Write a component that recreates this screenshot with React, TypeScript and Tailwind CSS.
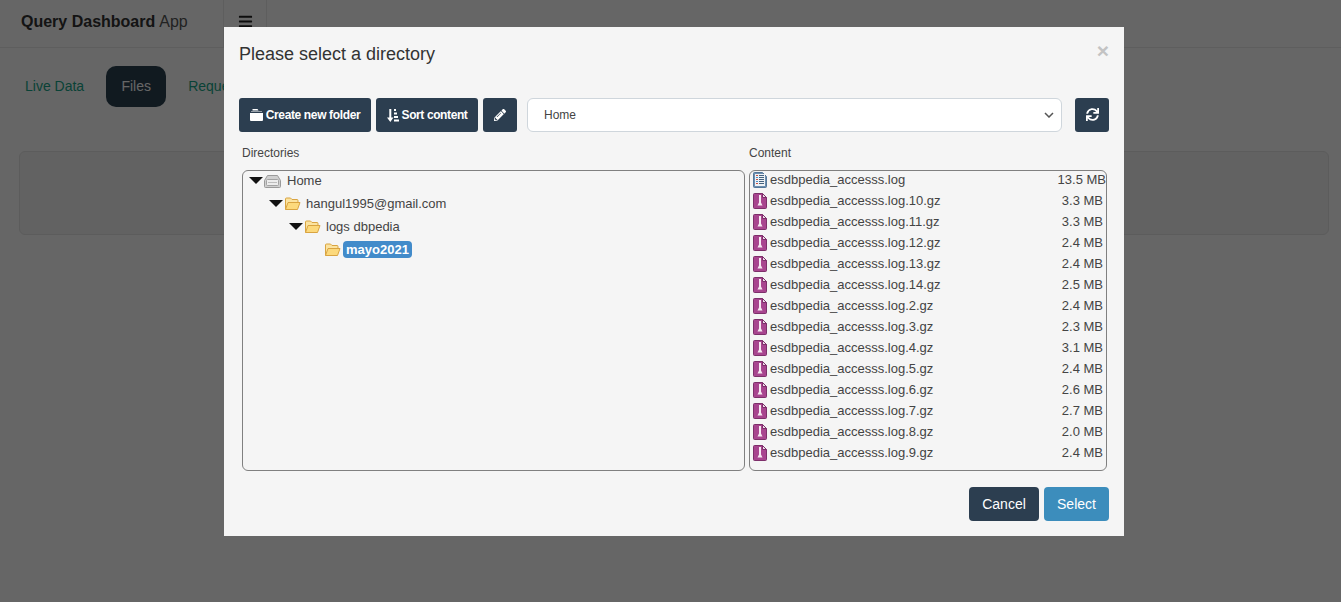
import { FaBars, FaPencilAlt, FaSync } from 'react-icons/fa'

type FileRow = {
  name: string
  size: string
}

const files: FileRow[] = [
  { name: 'esdbpedia_accesss.log', size: '13.5 MB' },
  { name: 'esdbpedia_accesss.log.10.gz', size: '3.3 MB' },
  { name: 'esdbpedia_accesss.log.11.gz', size: '3.3 MB' },
  { name: 'esdbpedia_accesss.log.12.gz', size: '2.4 MB' },
  { name: 'esdbpedia_accesss.log.13.gz', size: '2.4 MB' },
  { name: 'esdbpedia_accesss.log.14.gz', size: '2.5 MB' },
  { name: 'esdbpedia_accesss.log.2.gz', size: '2.4 MB' },
  { name: 'esdbpedia_accesss.log.3.gz', size: '2.3 MB' },
  { name: 'esdbpedia_accesss.log.4.gz', size: '3.1 MB' },
  { name: 'esdbpedia_accesss.log.5.gz', size: '2.4 MB' },
  { name: 'esdbpedia_accesss.log.6.gz', size: '2.6 MB' },
  { name: 'esdbpedia_accesss.log.7.gz', size: '2.7 MB' },
  { name: 'esdbpedia_accesss.log.8.gz', size: '2.0 MB' },
  { name: 'esdbpedia_accesss.log.9.gz', size: '2.4 MB' },
]

function Caret() {
  return (
    <svg width="14" height="7" viewBox="0 0 14 7" className="shrink-0">
      <path d="M0 0h14L7 7z" fill="#111" />
    </svg>
  )
}

function FolderOpen() {
  return (
    <svg width="17" height="14" viewBox="0 0 17 14" className="shrink-0">
      <path d="M1.500 12.500V2a1 1 0 0 1 1-1h4l1.500 1.500h5a1 1 0 0 1 1 1V5" fill="#fbe3a0" stroke="#d9a441" />
      <path d="M1.500 12.500 4 5.500h12l-2.500 7z" fill="#fcd97c" stroke="#d9a441" strokeLinejoin="round" />
    </svg>
  )
}

function DriveIcon() {
  return (
    <svg width="17" height="13" viewBox="0 0 17 13" className="shrink-0">
      <path d="M3.500.5h10l3 5v6a1 1 0 0 1-1 1h-14a1 1 0 0 1-1-1v-6z" fill="#cfcfcf" stroke="#9a9a9a" />
      <rect x="2.500" y="4.500" width="12" height="6" rx="1" fill="#ececec" stroke="#a2a2a2" />
      <path d="M4 7.500h9" stroke="#bdbdbd" />
    </svg>
  )
}

function LogIcon() {
  return (
    <svg width="14" height="16" viewBox="0 0 14 16" className="shrink-0">
      <path d="M.5 1.500a1 1 0 0 1 1-1h8l4 4v10a1 1 0 0 1-1 1h-11a1 1 0 0 1-1-1z" fill="#6d8fb0" stroke="#54779a" />
      <rect x="2" y="2" width="10" height="12" fill="#eef2f6" />
      <path d="M6 3.500h5M6 5.500h5M6 7.500h5M6 9.500h5M6 11.500h5" stroke="#44627f" />
      <path d="M3 3.500h2M3 7.500h2M3 11.500h2" stroke="#c8503f" />
      <path d="M3 5.500h2M3 9.500h2" stroke="#4a90c8" />
    </svg>
  )
}

function ZipIcon() {
  return (
    <svg width="14" height="16" viewBox="0 0 14 16" className="shrink-0">
      <path d="M.5 1.500a1 1 0 0 1 1-1h8l4 4v10a1 1 0 0 1-1 1h-11a1 1 0 0 1-1-1z" fill="#a8458f" stroke="#7d2f6a" />
      <path d="M9.500.5v4h4z" fill="#eed9e8" stroke="#7d2f6a" strokeLinejoin="round" />
      <path d="M6 2h2v7.500l1.500 3h-5L6 9.500z" fill="#f6e9f2" />
    </svg>
  )
}

function FolderGlyph() {
  return (
    <svg width="13" height="12" viewBox="0 0 13 12" className="shrink-0">
      <path d="M2.500 0h5l1 1.500h-6z" fill="#fff" />
      <path d="M1 2.500h11V3H1z" fill="#fff" />
      <path d="M0 4h13v7a1 1 0 0 1-1 1H1a1 1 0 0 1-1-1z" fill="#fff" />
    </svg>
  )
}

function SortGlyph() {
  return (
    <svg width="12" height="13" viewBox="0 0 12 13" className="shrink-0">
      <path d="M2.300 0h2v8.500H6.500L3.300 13 0 8.500h2.300z" fill="#fff" />
      <path d="M7 0h2v2H7zM7 3.500h3v2H7zM7 7h4v2H7zM7 10.500h5v2H7z" fill="#fff" />
    </svg>
  )
}

function TreeNode({
  indent,
  caret = true,
  icon,
  children,
}: {
  indent: string
  caret?: boolean
  icon: React.ReactNode
  children: React.ReactNode
}) {
  return (
    <div className={`flex h-[23px] items-center ${indent}`}>
      {caret && (
        <span className="mb-[4px]">
          <Caret />
        </span>
      )}
      <span className={caret ? 'mb-[3px] ml-[1px]' : 'mb-[3px]'}>{icon}</span>
      {children}
    </div>
  )
}

export default function App() {
  return (
    <div className="relative h-[602px] w-[1341px] overflow-hidden bg-white font-['Liberation_Sans',Arial,sans-serif]">
      {/* page behind the dialog */}
      <header className="flex h-[48px] items-stretch border-b border-[#ececec] bg-white">
        <div className="flex w-[223px] items-center pb-[4px] pl-[21px] text-[16px] text-[#555]">
          <b className="text-[#333]">Query Dashboard</b>
          <span className="ml-1">App</span>
        </div>
        <div className="flex w-[44px] items-center justify-center border-x border-[#ececec] pb-[4px] text-[#222]">
          <FaBars className="text-[15px]" />
        </div>
      </header>

      <nav className="mt-[18px] flex h-[41px] items-center pl-[10px] text-[14px] text-[#18a689]">
        <span className="px-[15px]">Live Data</span>
        <span className="ml-[7px] flex h-[41px] w-[60px] items-center justify-center rounded-[10px] bg-[#2b4150] text-white">
          Files
        </span>
        <span className="ml-[7px] px-[15px]">Requests</span>
      </nav>

      <div className="ml-[19px] mr-[12px] mt-[44px] h-[84px] rounded-[6px] border border-[#e6e6e6] bg-[#f5f5f5]" />

      <div className="absolute inset-0 bg-black/60" />

      {/* directory dialog */}
      <div className="absolute left-[224px] top-[27px] flex h-[509px] w-[900px] flex-col bg-[#f5f5f5] text-[#333]">
        <div className="flex h-[54px] items-start justify-between pl-[15px] pr-[15px] pt-[15px]">
          <h4 className="text-[18px] leading-[25px]">Please select a directory</h4>
          <span className="mt-[1px] text-[21px] font-bold leading-[16px] text-[#c3c3c3]">×</span>
        </div>

        <div className="mt-[17px] flex h-[34px] items-stretch pl-[15px] pr-[15px]">
          <button className="flex w-[132px] items-center justify-center gap-[3px] rounded-[3px] bg-[#2c3e50] text-[12px] font-bold tracking-[-0.36px] text-white">
            <FolderGlyph />
            Create new folder
          </button>
          <button className="ml-[5px] flex w-[102px] items-center justify-center gap-[3px] rounded-[3px] bg-[#2c3e50] text-[12px] font-bold tracking-[-0.4px] text-white">
            <SortGlyph />
            Sort content
          </button>
          <button className="ml-[5px] flex w-[34px] items-center justify-center rounded-[3px] bg-[#2c3e50] text-white">
            <FaPencilAlt className="text-[12px]" />
          </button>
          <div className="ml-[10px] flex w-[535px] items-center justify-between rounded-[6px] border border-[#cfd6dc] bg-white pl-[16px] pr-[7px] text-[12px] text-[#444]">
            <span>Home</span>
            <svg width="10" height="6" viewBox="0 0 10 6">
              <path d="M1 1l4 4 4-4" fill="none" stroke="#555" strokeWidth="1.500" />
            </svg>
          </div>
          <button className="ml-[13px] flex w-[34px] items-center justify-center rounded-[3px] bg-[#2c3e50] text-white">
            <FaSync className="mb-[2px] text-[13px]" />
          </button>
        </div>

        <div className="mt-[14px] flex pl-[18px] text-[12px] text-[#444]">
          <div className="w-[507px]">
            <div className="h-[24px] leading-[14px]">Directories</div>
            <div className="h-[301px] w-[503px] rounded-[6px] border border-[#808080] pl-[6px] text-[13px]">
              <TreeNode indent="" icon={<DriveIcon />}>
                <span className="mb-[4px] ml-[6px]">Home</span>
              </TreeNode>
              <TreeNode indent="ml-[20px]" icon={<FolderOpen />}>
                <span className="mb-[4px] ml-[5px]">hangul1995@gmail.com</span>
              </TreeNode>
              <TreeNode indent="ml-[40px]" icon={<FolderOpen />}>
                <span className="mb-[4px] ml-[5px]">logs dbpedia</span>
              </TreeNode>
              <TreeNode indent="ml-[75px]" caret={false} icon={<FolderOpen />}>
                <span className="mb-[4px] ml-[2px] rounded-[4px] bg-[#428bca] px-[3px] font-bold leading-[17px] text-white">
                  mayo2021
                </span>
              </TreeNode>
            </div>
          </div>
          <div>
            <div className="h-[24px] leading-[14px]">Content</div>
            <div className="h-[301px] w-[358px] rounded-[6px] border border-[#808080] pl-[3px] text-[13px]">
              {files.map((file, i) => (
                <div key={file.name} className="flex h-[21px] items-center justify-between pb-[3px]">
                  <div className="flex items-center gap-[3px]">
                    {i === 0 ? <LogIcon /> : <ZipIcon />}
                    <span>{file.name}</span>
                  </div>
                  <span className={i === 0 ? '' : 'pr-[3px]'}>{file.size}</span>
                </div>
              ))}
            </div>
          </div>
        </div>

        <div className="mt-[16px] flex justify-end gap-[5px] pr-[15px] text-[14px] text-white">
          <button className="h-[34px] w-[70px] rounded-[4px] bg-[#2c3e50]">Cancel</button>
          <button className="h-[34px] w-[65px] rounded-[4px] bg-[#3c8dbc]">Select</button>
        </div>
      </div>
    </div>
  )
}
